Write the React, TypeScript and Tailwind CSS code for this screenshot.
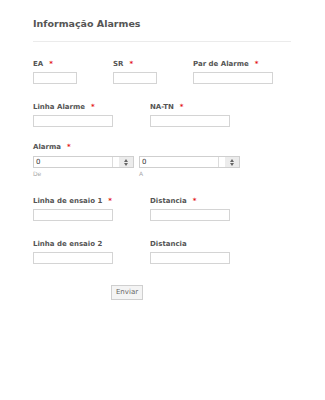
import React from "react"

const font = { fontFamily: '"DejaVu Sans", Verdana, sans-serif' }

const Label = ({ text, req }: { text: string; req?: boolean }) => (
  <div className="h-[10px] flex items-center text-[7px] font-bold text-[#555] leading-none whitespace-nowrap">
    {text}
    {req && <span className="ml-[6px] text-[#e4161a]">*</span>}
  </div>
)

const Field = ({ label, req, w }: { label: string; req?: boolean; w: string }) => (
  <div className="flex flex-col">
    <Label text={label} req={req} />
    <div className={`mt-[3px] h-[12px] border border-[#d4d4d4] bg-white ${w}`} />
  </div>
)

const Spinner = ({ sub }: { sub: string }) => (
  <div className="flex flex-col">
    <div className="flex h-[12px] w-[101px] border border-[#cfcfcf] bg-white">
      <div className="flex-1 flex items-center pl-[2px] text-[7px] text-[#333] leading-none border-r border-[#dcdcdc]">
        0
      </div>
      <div className="w-[6px]" />
      <div className="w-[14px] bg-[#ececec] flex flex-col items-center justify-center gap-[1px]">
        <svg width="4" height="3" viewBox="0 0 4 3">
          <path d="M2 0L4 3H0Z" fill="#666" />
        </svg>
        <svg width="4" height="3" viewBox="0 0 4 3">
          <path d="M0 0H4L2 3Z" fill="#666" />
        </svg>
      </div>
    </div>
    <div className="mt-[3px] text-[6px] text-[#aaa] leading-none">{sub}</div>
  </div>
)

export default function App() {
  return (
    <div className="w-[325px] h-[400px] bg-white pl-[33px]" style={font}>
      <div className="pt-[19px] h-[30px] text-[9.5px] font-bold text-[#555] leading-none">
        Informação Alarmes
      </div>
      <div className="mt-[11px] w-[258px] h-px bg-[#ebebeb]" />

      <div className="mt-[17px] flex">
        <div className="w-[80px]">
          <Field label="EA" req w="w-[44px]" />
        </div>
        <div className="w-[80px]">
          <Field label="SR" req w="w-[44px]" />
        </div>
        <div className="w-[80px]">
          <Field label="Par de Alarme" req w="w-[80px]" />
        </div>
      </div>

      <div className="mt-[18px] flex">
        <div className="w-[117px]">
          <Field label="Linha Alarme" req w="w-[80px]" />
        </div>
        <Field label="NA-TN" req w="w-[80px]" />
      </div>

      <div className="mt-[15px]">
        <Label text="Alarma" req />
        <div className="mt-[4px] flex gap-[5px]">
          <Spinner sub="De" />
          <Spinner sub="A" />
        </div>
      </div>

      <div className="mt-[19px] flex">
        <div className="w-[117px]">
          <Field label="Linha de ensaio 1" req w="w-[80px]" />
        </div>
        <Field label="Distancia" req w="w-[80px]" />
      </div>

      <div className="mt-[18px] flex">
        <div className="w-[117px]">
          <Field label="Linha de ensaio 2" w="w-[80px]" />
        </div>
        <Field label="Distancia" w="w-[80px]" />
      </div>

      <div className="mt-[21px] pl-[78px] flex">
        <button className="w-[32px] h-[15px] border border-[#cfcfcf] bg-[#f4f4f4] text-[7px] text-[#666] leading-none">
          Enviar
        </button>
      </div>
    </div>
  )
}
